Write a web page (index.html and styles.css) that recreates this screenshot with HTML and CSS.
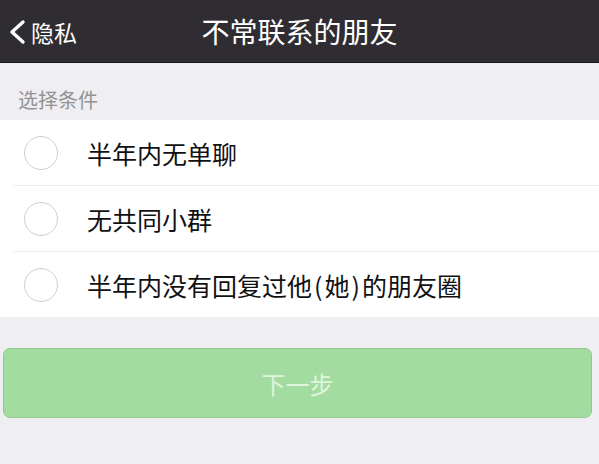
FILE: index.html
```html
<!DOCTYPE html>
<html>
<head>
  <title>不常联系的朋友</title>
  <meta name="viewport" content="width=device-width, initial-scale=1.0" />
  <link rel="stylesheet" href="styles.css">
</head>
<body>

  <div class="navbar">
    <a class="back" href="#">
      <svg width="18" height="28" viewBox="0 0 18 28"><path d="M15 4 L4 14 L15 24" fill="none" stroke="#fff" stroke-width="3.4" stroke-linecap="round" stroke-linejoin="round"/></svg>
      <span>隐私</span>
    </a>
    <h1>不常联系的朋友</h1>
  </div>

  <div class="section-title">选择条件</div>

  <ul class="options">
    <li><span class="radio"></span>半年内无单聊</li>
    <li><span class="radio"></span>无共同小群</li>
    <li><span class="radio"></span>半年内没有回复过他<span class="paren">(</span>她<span class="paren">)</span>的朋友圈</li>
  </ul>

  <div class="actions">
    <button class="next" disabled>下一步</button>
  </div>

</body>
</html>
```

FILE: styles.css
```css
body {
  margin: 0;
  background: #efeef2;
  font-family: "Noto Sans CJK SC", "Noto Sans", sans-serif;
  color: #111;
}

.navbar {
  position: relative;
  height: 62px;
  background: #2f2d32;
  border-bottom: 1px solid #1a191c;
  display: flex;
  align-items: center;
  justify-content: center;
}

.navbar h1 {
  margin: 0;
  font-size: 28px;
  font-weight: normal;
  color: #fff;
}

.back {
  position: absolute;
  left: 8px;
  top: 15px;
  display: flex;
  align-items: center;
  gap: 5px;
  color: #fff;
  text-decoration: none;
  font-size: 23px;
}

.section-title {
  padding: 23px 0 0 18px;
  height: 34px;
  line-height: 28px;
  font-size: 20px;
  color: #939393;
}

.options {
  list-style: none;
  margin: 0;
  padding: 0 0 0 13px;
  background: #fff;
}

.options li {
  height: 65px;
  display: flex;
  align-items: center;
  font-size: 25px;
  border-bottom: 1px solid #ececec;
}

.options li:last-child {
  border-bottom: none;
}

.paren {
  padding: 0 2px;
}

.radio {
  width: 34px;
  height: 34px;
  border: 1px solid #cfcfcf;
  border-radius: 50%;
  box-sizing: border-box;
  margin: 0 29px 0 11px;
}

.actions {
  padding: 31px 7px 0 3px;
}

.next {
  width: 100%;
  height: 70px;
  border: 1px solid #92c98f;
  border-radius: 7px;
  background: #a3dca1;
  color: #e0f5dc;
  font-family: "Noto Sans CJK SC", sans-serif;
  font-size: 24px;
}
```
